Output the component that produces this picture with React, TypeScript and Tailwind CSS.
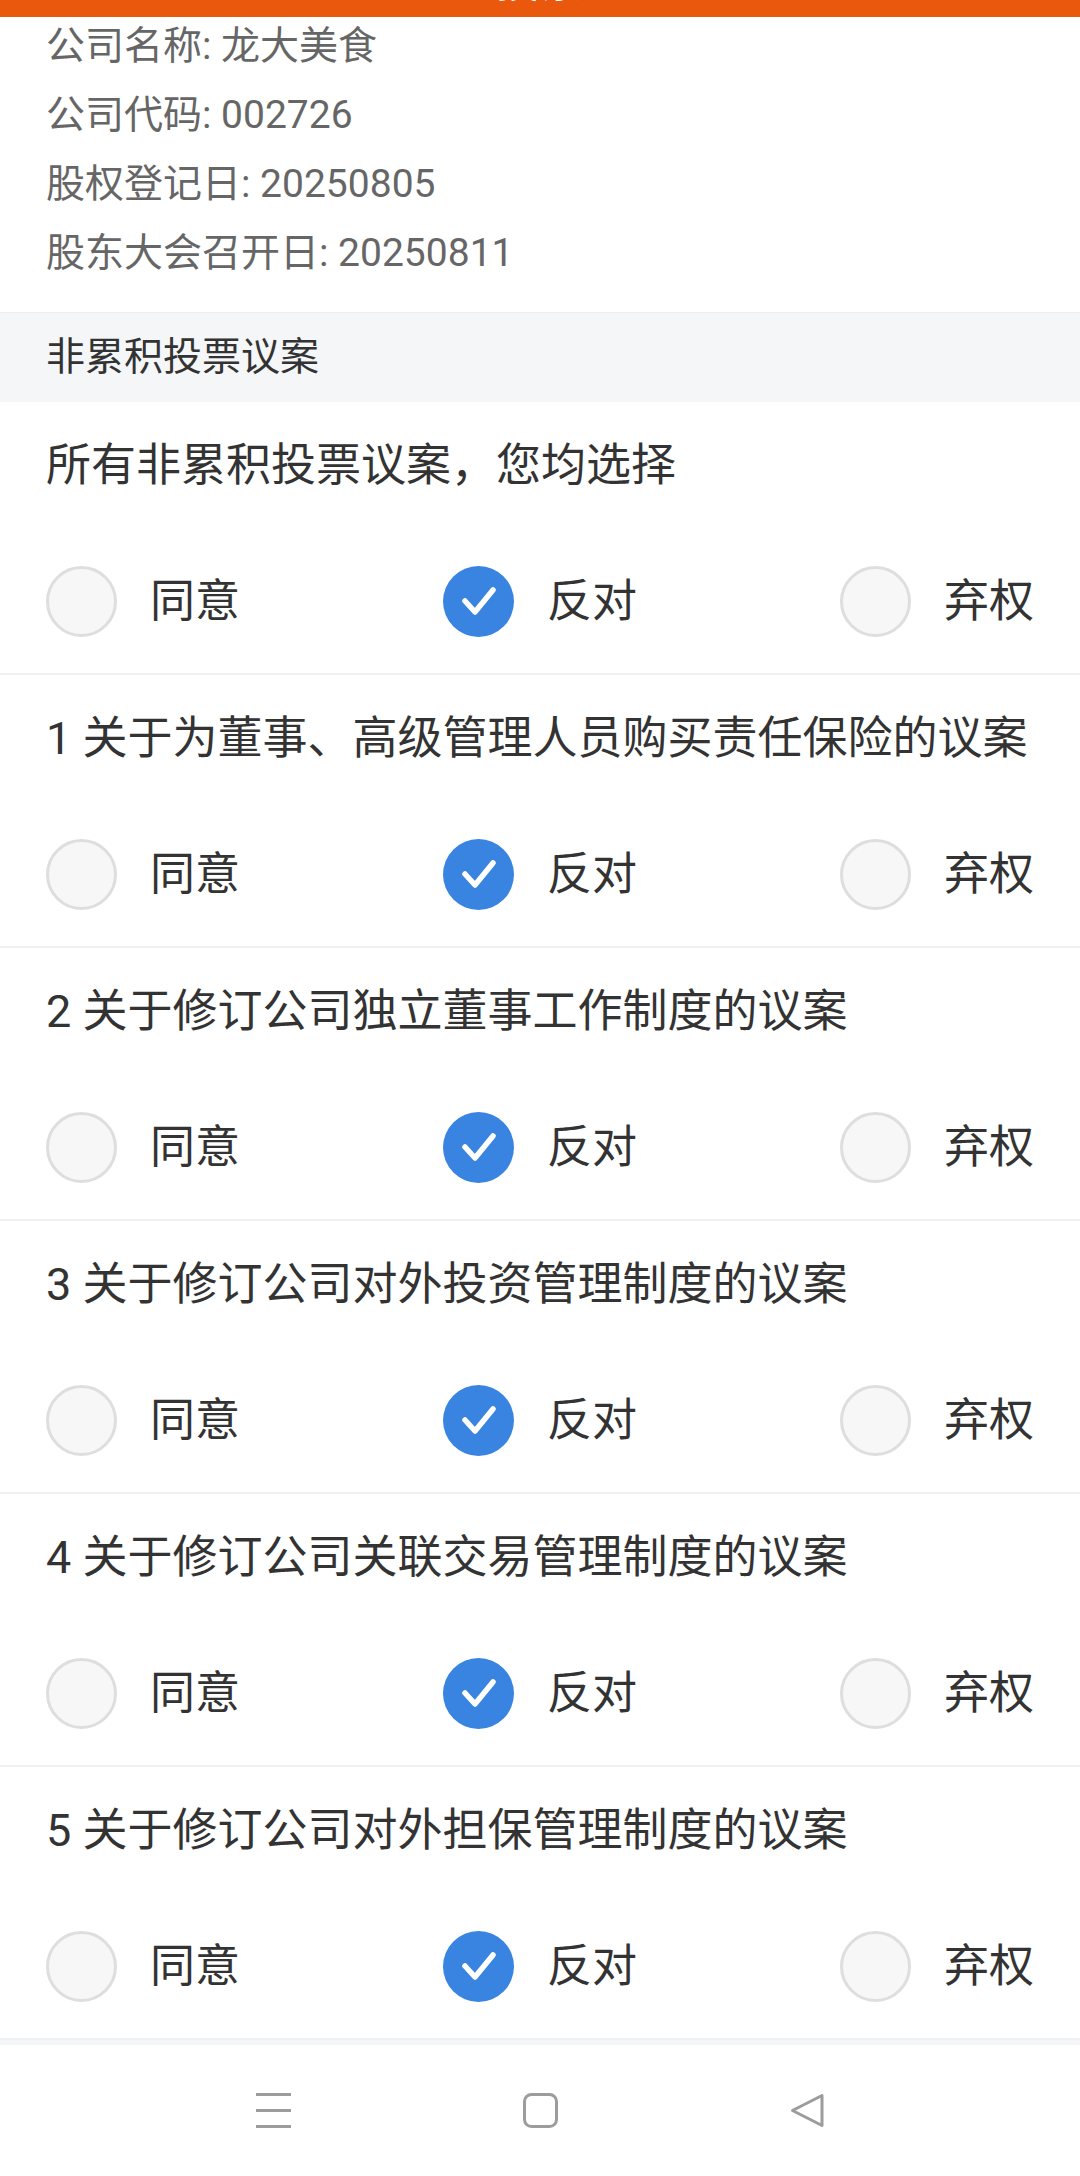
import React from "react";

const proposals = [
  "所有非累积投票议案，您均选择",
  "1 关于为董事、高级管理人员购买责任保险的议案",
  "2 关于修订公司独立董事工作制度的议案",
  "3 关于修订公司对外投资管理制度的议案",
  "4 关于修订公司关联交易管理制度的议案",
  "5 关于修订公司对外担保管理制度的议案",
];

const options = ["同意", "反对", "弃权"];

const Radio = ({ checked }: { checked: boolean }) => {
  if (checked) {
    return (
      <div className="w-[71px] h-[71px] rounded-full bg-[#3884e0] flex items-center justify-center shrink-0">
        <svg width="71" height="71" viewBox="0 0 71 71">
          <polyline
            points="22,35 32,46 50,24"
            fill="none"
            stroke="#ffffff"
            strokeWidth="5.5"
            strokeLinecap="round"
            strokeLinejoin="round"
          />
        </svg>
      </div>
    );
  }
  return <div className="w-[71px] h-[71px] rounded-full bg-[#f7f7f7] border-[3px] border-[#dedede] shrink-0"></div>;
};

const ProposalBlock = ({ title }: { title: string }) => (
  <div className="flex flex-col px-[46px] pt-[28px] pb-[36px] border-b-2 border-[#f0f0f0] bg-white">
    <div className="text-[45px] leading-[72px] text-[#333333] whitespace-nowrap">{title}</div>
    <div className="flex items-center justify-between h-[71px] mt-[64px]">
      {options.map((opt, i) => (
        <div key={opt} className="flex items-center gap-[33px]">
          <Radio checked={i === 1} />
          <span className="text-[45px] leading-none text-[#333333]">{opt}</span>
        </div>
      ))}
    </div>
  </div>
);

export default function App() {
  return (
    <div
      className="w-[1080px] h-[2176px] bg-white flex flex-col overflow-hidden"
      style={{ fontFamily: 'Roboto, "Noto Sans CJK SC", sans-serif' }}
    >
      {/* header, scrolled mostly out of view */}
      <div className="h-[17px] bg-[#e9580c] overflow-hidden flex items-end justify-center pb-[13px] shrink-0">
        <span className="text-[44px] leading-none text-white font-bold">投票</span>
      </div>

      {/* meeting info */}
      <div className="flex flex-col gap-[11px] px-[46px] pb-[30px] text-[39px] leading-[58px] text-[#666666]">
        <div>公司名称: 龙大美食</div>
        <div>公司代码: 002726</div>
        <div>股权登记日: 20250805</div>
        <div>股东大会召开日: 20250811</div>
      </div>

      {/* section title */}
      <div className="h-[90px] bg-[#f5f6f8] border-t border-[#eeeeee] flex items-center px-[46px] text-[39px] text-[#333333] shrink-0">
        非累积投票议案
      </div>

      {proposals.map((p) => (
        <ProposalBlock key={p} title={p} />
      ))}

      <div className="h-[5px] bg-[#f5f6f8] shrink-0"></div>

      {/* system nav bar */}
      <div className="flex-1 bg-white flex items-center justify-center gap-[232px]">
        <svg width="35" height="35" viewBox="0 0 35 35">
          <g stroke="#9c9c9c" strokeWidth="3" strokeLinecap="butt">
            <line x1="0" y1="1.5" x2="35" y2="1.5" />
            <line x1="0" y1="17.5" x2="35" y2="17.5" />
            <line x1="0" y1="33.5" x2="35" y2="33.5" />
          </g>
        </svg>
        <svg width="35" height="35" viewBox="0 0 35 35">
          <rect x="1.5" y="1.5" width="32" height="32" rx="7" fill="none" stroke="#9c9c9c" strokeWidth="3" />
        </svg>
        <svg width="35" height="35" viewBox="0 0 35 35">
          <path
            d="M32 2.5 L32 32.5 L2.5 17.5 Z"
            fill="none"
            stroke="#9c9c9c"
            strokeWidth="3"
            strokeLinejoin="round"
          />
        </svg>
      </div>
    </div>
  );
}
